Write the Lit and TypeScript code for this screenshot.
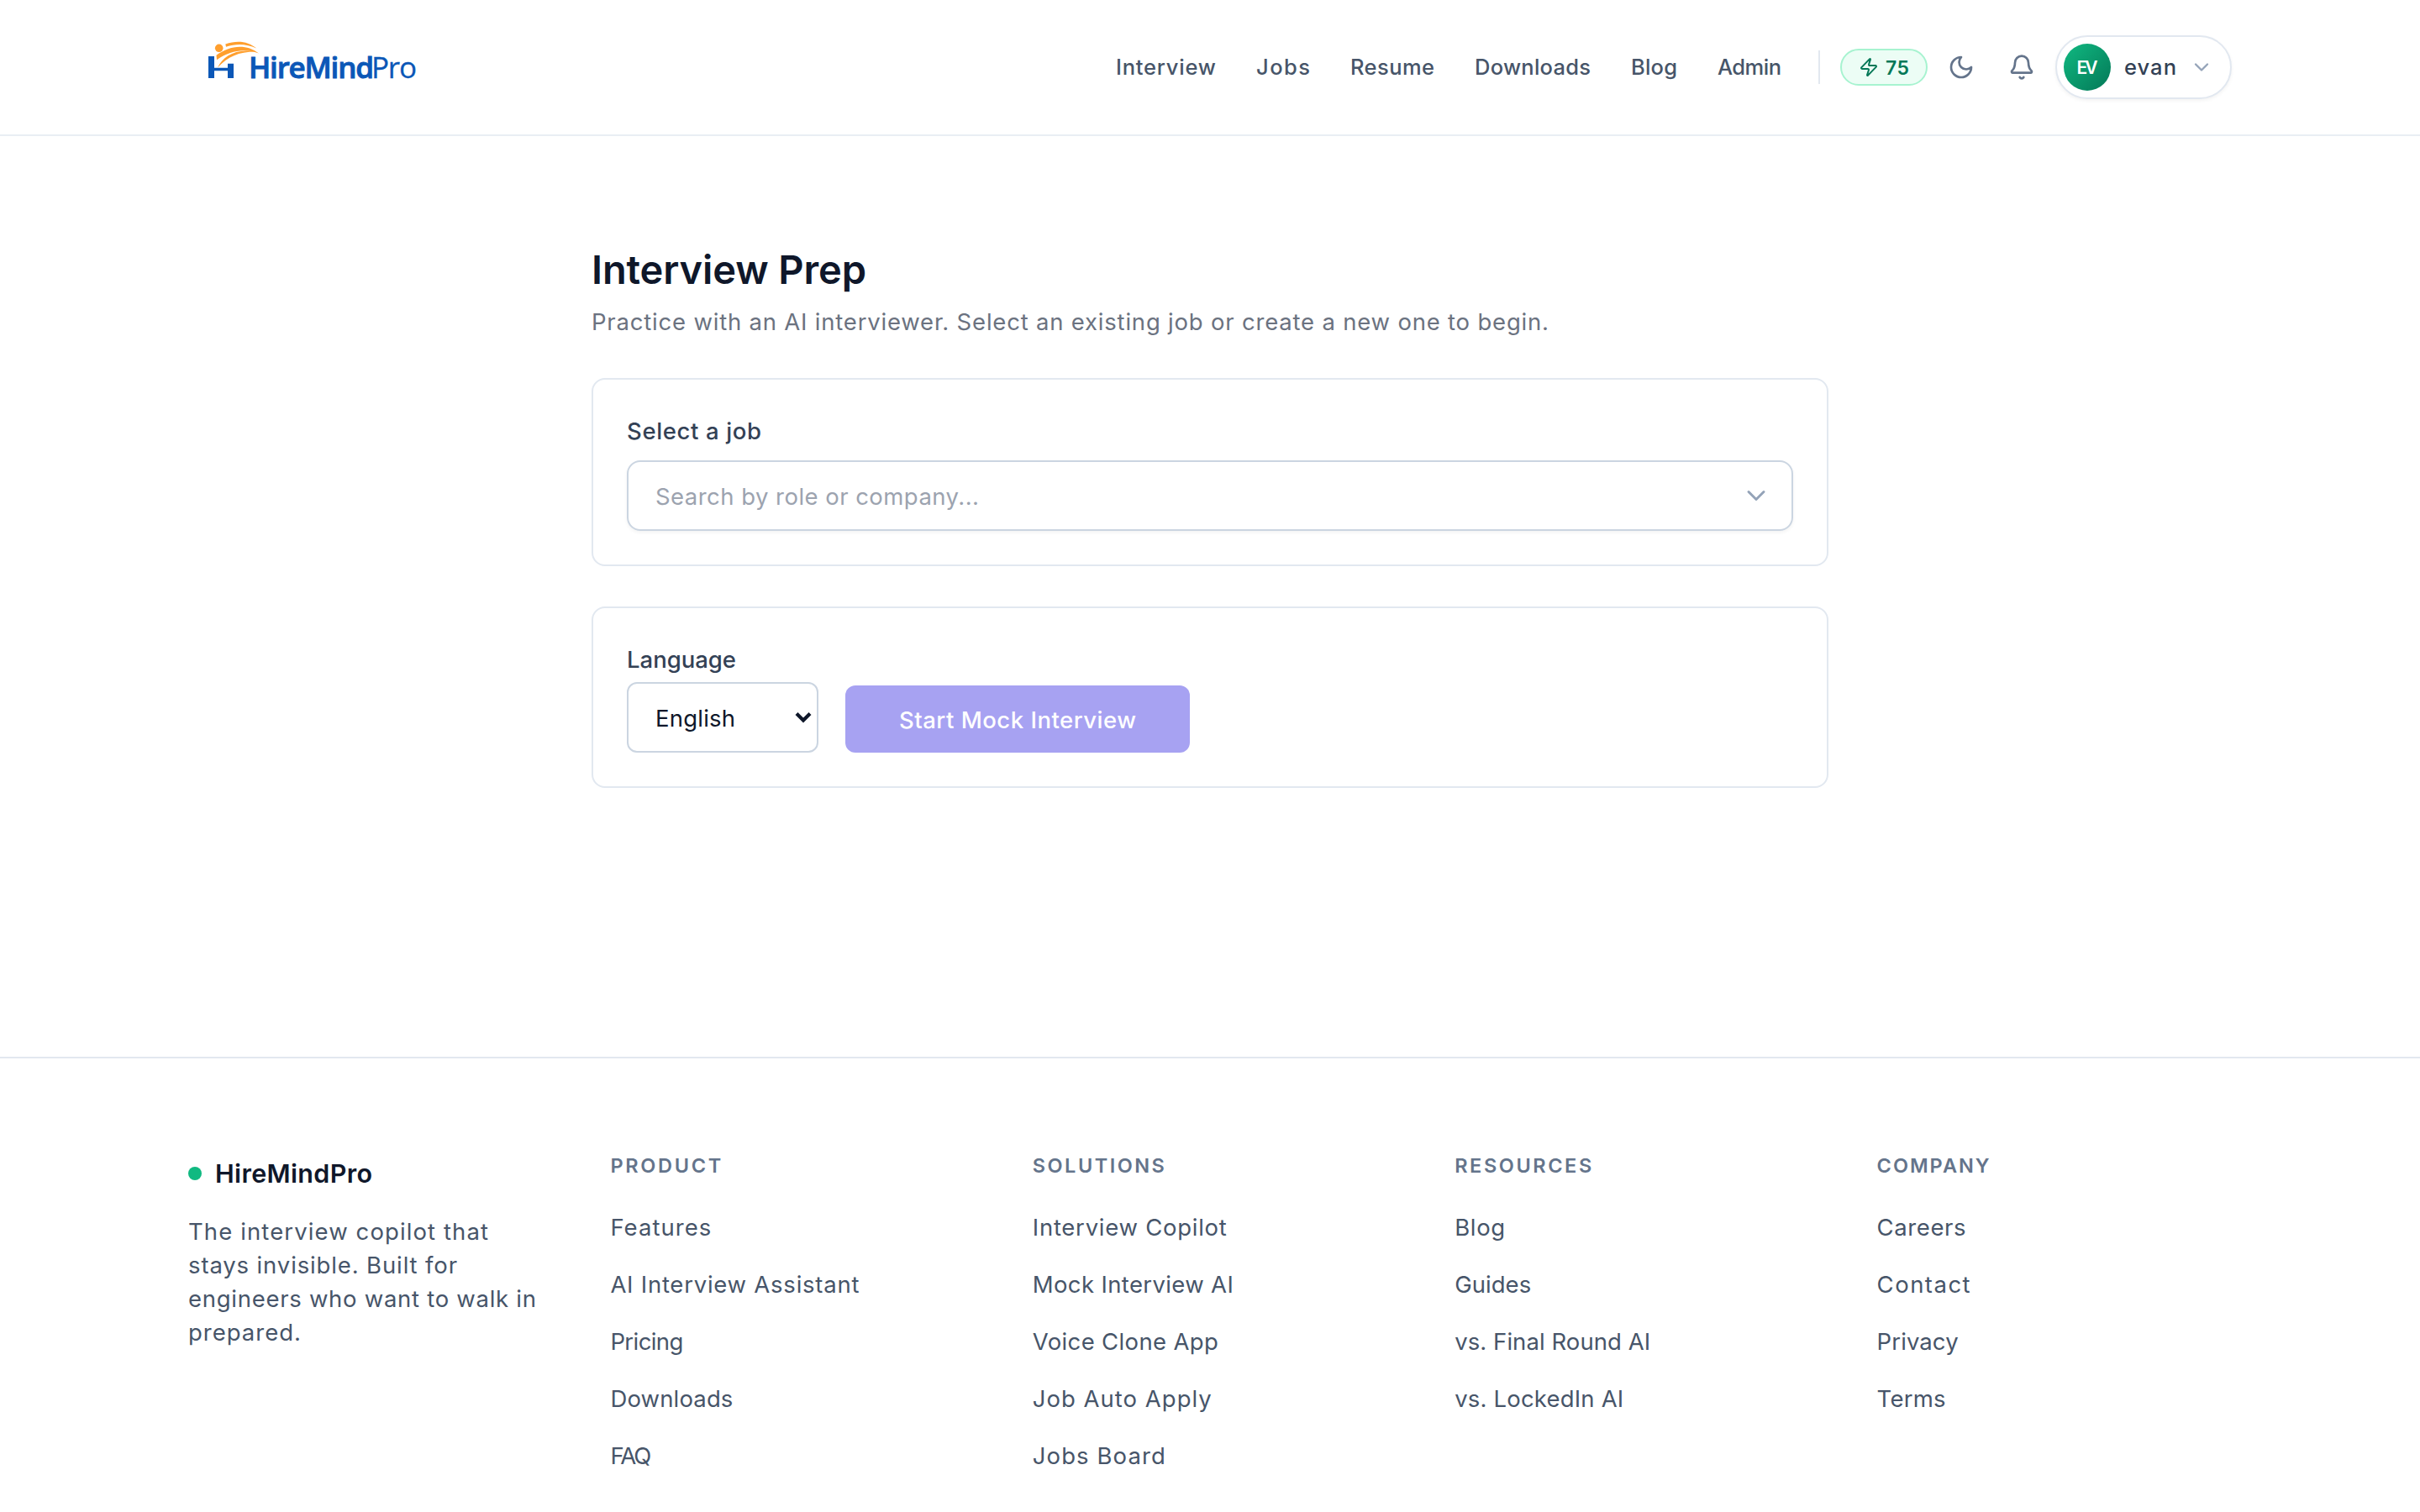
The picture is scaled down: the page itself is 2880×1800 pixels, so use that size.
import { LitElement, html, css, svg } from "lit";
import { customElement, property } from "lit/decorators.js";

/** One line of text whose tracking is adjusted so it spans a given measure. */
@customElement("fit-label")
class FitLabel extends LitElement {
  @property() text = "";
  @property({ type: Number }) measure = 0;

  static styles = css`
    :host { display: block; white-space: pre; }
    .run { display: inline-block; }
  `;

  updated() {
    const run = this.renderRoot.querySelector(".run") as HTMLElement;
    run.style.letterSpacing = "0";
    const natural = run.getBoundingClientRect().width;
    const gaps = Math.max(1, this.text.length - 1);
    run.style.letterSpacing = `${(this.measure - natural) / gaps}px`;
    run.style.width = `${this.measure}px`;
  }

  render() {
    return html`<span class="run">${this.text}</span>`;
  }
}

type Item = [string, number];

const NAV: Item[] = [
  ["Interview", 119], ["Jobs", 64], ["Resume", 100], ["Downloads", 138], ["Blog", 55], ["Admin", 76],
];

const COLUMNS: { title: Item; links: Item[] }[] = [
  {
    title: ["PRODUCT", 132],
    links: [["Features", 120], ["AI Interview Assistant", 296], ["Pricing", 87], ["Downloads", 146], ["FAQ", 49]],
  },
  {
    title: ["SOLUTIONS", 157],
    links: [["Interview Copilot", 231], ["Mock Interview AI", 239], ["Voice Clone App", 221], ["Job Auto Apply", 213], ["Jobs Board", 158]],
  },
  {
    title: ["RESOURCES", 163],
    links: [["Blog", 60], ["Guides", 91], ["vs. Final Round AI", 233], ["vs. LockedIn AI", 201]],
  },
  {
    title: ["COMPANY", 134],
    links: [["Careers", 106], ["Contact", 111], ["Privacy", 97], ["Terms", 82]],
  },
];

const BLURB: Item[] = [
  ["The interview copilot that", 357], ["stays invisible. Built for", 320],
  ["engineers who want to walk in", 414], ["prepared.", 134],
];

const label = (cls: string, [text, measure]: Item) =>
  html`<fit-label class=${cls} .text=${text} .measure=${measure}></fit-label>`;

const icon = (cls: string, body: unknown) =>
  html`<svg class="icon ${cls}" viewBox="0 0 24 24" aria-hidden="true">${body}</svg>`;

const chevron = svg`<path d="m6 9 6 6 6-6"/>`;

@customElement("app-root")
class AppRoot extends LitElement {
  static styles = css`
    * { box-sizing: border-box; }
    :host {
      display: block; height: 1800px; overflow: hidden; background: #fff; color: #0f172a;
      font-family: Inter, "Liberation Sans", sans-serif; font-size: 27.5px; line-height: 40px;
    }
    .icon { display: block; flex: none; fill: none; stroke: currentColor; stroke-width: 2; stroke-linecap: round; stroke-linejoin: round; }

    .header { height: 162px; padding: 0 224px; border-bottom: 2px solid #e9eef4; display: flex; align-items: center; justify-content: space-between; }
    .logo { display: flex; align-items: flex-start; padding-left: 24px; height: 66px; color: #0b57b7; }
    .mark { display: block; width: 48px; height: 50px; overflow: visible; }
    .word { font-family: "Open Sans", "Noto Sans", sans-serif; font-size: 35px; line-height: 46px; padding-top: 10px; }
    .word.heavy { font-weight: 600; -webkit-text-stroke: .9px #0b57b7; margin-right: -3px; }
    .word.light { font-weight: 400; -webkit-text-stroke: .3px #0b57b7; }
    .right { display: flex; align-items: center; }
    .nav { display: flex; gap: 48px; color: #475569; padding-right: 44px; }
    .navlink { font-size: 25.5px; font-weight: 500; line-height: 40px; }
    .divider { width: 2px; height: 40px; background: #e2e8f0; }
    .credits { width: 104px; height: 44px; margin-left: 24px; border: 2px solid #a7f3d0; border-radius: 22px; background: #ecfdf5; color: #047857; display: flex; align-items: center; padding: 0 20px; gap: 8px; }
    .bolt { width: 24px; height: 24px; }
    .count { font-size: 23px; font-weight: 600; padding-top: 1px; }
    .tool { width: 64px; height: 64px; margin-left: 8px; display: grid; place-items: center; color: #64748b; }
    .glyph { width: 32px; height: 32px; }
    .user { width: 210px; height: 76px; margin-left: 8px; padding: 0 20px 0 8px; border: 2px solid #e2e8f0; border-radius: 38px; box-shadow: 0 2px 4px rgba(0,0,0,.05); display: flex; align-items: center; gap: 16px; background: #fff; }
    .avatar { width: 56px; height: 56px; border-radius: 50%; background: linear-gradient(135deg, #10b981, #047857); color: #fff; display: grid; place-items: center; flex: none; }
    .initials { font-size: 21px; font-weight: 600; line-height: 28px; padding-top: 1px; }
    .name { font-size: 25.5px; font-weight: 500; color: #334155; }
    .small { width: 28px; height: 28px; color: #94a3b8; }

    .main { width: 1472px; margin: 0 auto; padding-top: 126px; height: 1096px; display: flex; flex-direction: column; }
    .title { font-size: 47px; font-weight: 600; line-height: 64px; padding-top: 1px; }
    .lead { color: #6b7280; padding-top: 10px; margin-bottom: 47px; }
    .card { border: 2px solid #e2e8f0; border-radius: 16px; padding: 40px; margin-bottom: 48px; background: #fff; }
    .first { height: 224px; }
    .second { height: 216px; }
    .caption { font-weight: 500; color: #334155; padding-top: 1px; }
    .search { height: 84px; margin-top: 15px; border: 2px solid #cbd5e1; border-radius: 16px; box-shadow: 0 2px 4px rgba(0,0,0,.05); display: flex; align-items: center; justify-content: space-between; padding: 0 24px 0 32px; }
    .hint { color: #9ca3af; padding-top: 1px; }
    .mid { width: 36px; height: 36px; color: #94a3b8; }
    .controls { display: flex; align-items: flex-end; gap: 32px; margin-top: 7px; }
    .select { width: 228px; height: 84px; border: 2px solid #cbd5e1; border-radius: 12px; padding: 0 6px 0 32px; display: flex; align-items: center; justify-content: space-between; }
    .choice { padding-top: 1px; }
    .arrow { width: 20px; height: 14px; fill: none; stroke: #0f172a; stroke-width: 4.200; }
    .start { width: 410px; height: 80px; border-radius: 12px; background: #a7a2f2; color: #fff; display: flex; align-items: center; justify-content: center; }
    .action { font-weight: 500; padding-top: 1px; }

    .footer { border-top: 2px solid #e2e8f0; padding: 112px 224px 0; display: grid; grid-template-columns: repeat(5, 1fr); column-gap: 80px; }
    .brand { display: flex; align-items: center; gap: 16px; padding-top: 6px; height: 44px; margin-bottom: 30px; }
    .dot { width: 16px; height: 16px; border-radius: 50%; background: #10b981; }
    .brandname { font-size: 30.5px; font-weight: 600; }
    .blurb, .link { color: #475569; }
    .heading { font-size: 23.5px; font-weight: 600; color: #64748b; line-height: 32px; margin-bottom: 28px; }
    .links { display: flex; flex-direction: column; gap: 28px; padding-top: 9px; }
  `;

  render() {
    return html`
      <header class="header">
        <div class="logo">
          <svg class="mark" viewBox="0 0 48 50" aria-hidden="true">
            <path fill="#0b57b7" d="M0 20h7v13.700h16V28.700h7V46h-7v-8.700H7V46H0z"/>
            <circle cx="12.700" cy="10.300" r="4.800" fill="#ff9f2e"/>
            <path fill="#ff9f2e" d="M20.300 5.500C34 .6 47 1.800 57.300 10.600 45 5.200 34 4.500 21 8.800Z"/>
            <path fill="#ff9f2e" d="M9.500 18.800C24 8 44 4 60 16.600 42 10.500 27 13 10 24.200Z"/>
            <path fill="#ff9f2e" d="M11 33.500C17 20 33 10 56 14.500 36 14.500 23 20.500 11 33.500Z"/>
          </svg>
          ${label("word heavy", ["HireMind", 149])}
          ${label("word light", ["Pro", 54])}
        </div>
        <div class="right">
          <nav class="nav">${NAV.map((n) => label("navlink", n))}</nav>
          <span class="divider"></span>
          <div class="credits">
            ${icon("bolt", svg`<path d="M4 14a1 1 0 0 1-.78-1.63l9.9-10.2a.5.5 0 0 1 .86.46l-1.920 6.020A1 1 0 0 0 13 10h7a1 1 0 0 1 .78 1.630l-9.900 10.200a.5.5 0 0 1-.86-.46l1.920-6.020A1 1 0 0 0 11 14z"/>`)}
            ${label("count", ["75", 28])}
          </div>
          <span class="tool">${icon("glyph", svg`<path d="M12 3a6 6 0 0 0 9 9 9 9 0 1 1-9-9Z"/>`)}</span>
          <span class="tool">${icon("glyph", svg`<path d="M10.268 21a2 2 0 0 0 3.464 0"/><path d="M3.262 15.326A1 1 0 0 0 4 17h16a1 1 0 0 0 .74-1.673C19.410 13.956 18 12.499 18 8A6 6 0 0 0 6 8c0 4.499-1.411 5.956-2.738 7.326"/>`)}</span>
          <div class="user">
            <span class="avatar">${label("initials", ["EV", 25])}</span>
            ${label("name", ["evan", 62])}
            ${icon("small", chevron)}
          </div>
        </div>
      </header>

      <main class="main">
        ${label("title", ["Interview Prep", 327])}
        ${label("lead", ["Practice with an AI interviewer. Select an existing job or create a new one to begin.", 1139])}
        <section class="card first">
          ${label("caption", ["Select a job", 160])}
          <div class="search">
            ${label("hint", ["Search by role or company...", 385])}
            ${icon("mid", chevron)}
          </div>
        </section>
        <section class="card second">
          ${label("caption", ["Language", 130])}
          <div class="controls">
            <div class="select">
              ${label("choice", ["English", 95])}
              <svg class="arrow" viewBox="0 0 20 14"><path d="M2 2.500l8 8 8-8"/></svg>
            </div>
            <div class="start">${label("action", ["Start Mock Interview", 282])}</div>
          </div>
        </section>
      </main>

      <footer class="footer">
        <div class="about">
          <div class="brand"><span class="dot"></span>${label("brandname", ["HireMindPro", 187])}</div>
          ${BLURB.map((b) => label("blurb", b))}
        </div>
        ${COLUMNS.map((c) => html`
          <div class="column">
            ${label("heading", c.title)}
            <div class="links">${c.links.map((l) => label("link", l))}</div>
          </div>`)}
      </footer>
    `;
  }
}
